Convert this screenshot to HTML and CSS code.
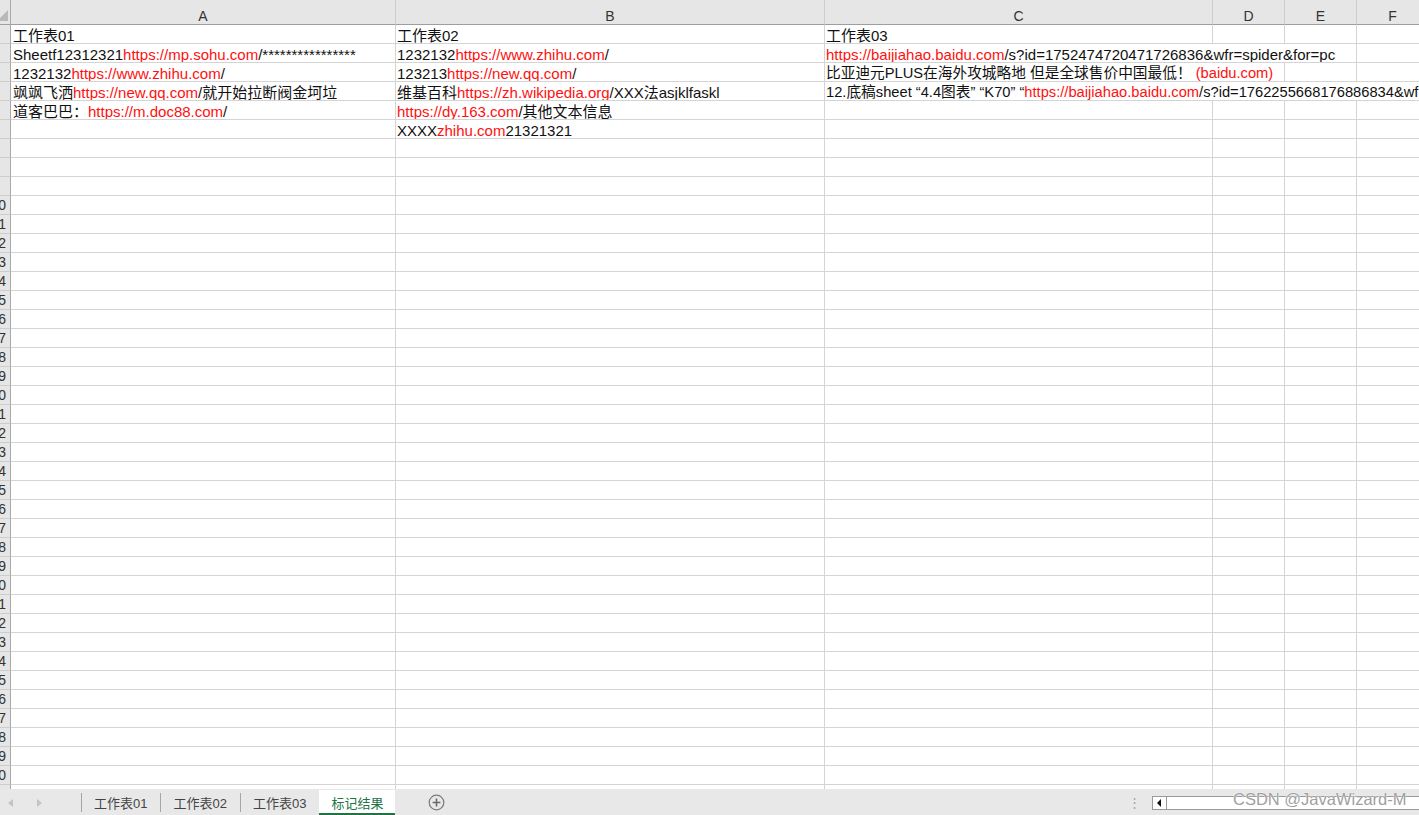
FILE: index.html
```html
<!DOCTYPE html>
<html lang="zh-CN">
<head>
<meta charset="utf-8">
<title>标记结果</title>
<link rel="stylesheet" href="styles.css">
</head>
<body>
<div class="app">
  <div class="sheet">
    <div class="row head">
      <div class="corner"><svg width="10" height="24" viewBox="0 0 10 24"><polygon points="8,10 8,21 -3,21" fill="#b9b9b9"/></svg></div>
      <div class="ch">A</div><div class="ch">B</div><div class="ch">C</div><div class="ch">D</div><div class="ch">E</div><div class="ch">F</div>
    </div>
    <div class="row"><div class="rh"></div><div class="c a">工作表01</div><div class="c">工作表02</div><div class="c">工作表03</div><div class="c"></div><div class="c"></div><div class="c"></div></div>
    <div class="row"><div class="rh"></div><div class="c a">Sheetf12312321<span class="r">https://mp.sohu.com</span>/****************</div><div class="c">1232132<span class="r">https://www.zhihu.com</span>/</div><div class="c span3"><span class="r">https://baijiahao.baidu.com</span>/s?id=1752474720471726836&amp;wfr=spider&amp;for=pc</div><div class="c"></div></div>
    <div class="row"><div class="rh"></div><div class="c a">1232132<span class="r">https://www.zhihu.com</span>/</div><div class="c">123213<span class="r">https://new.qq.com</span>/</div><div class="c span2 cjk">比亚迪元PLUS在海外攻城略地 但是全球售价中国最低！ <span class="r">(baidu.com)</span></div><div class="c"></div><div class="c"></div></div>
    <div class="row"><div class="rh"></div><div class="c a">飒飒飞洒<span class="r">https://new.qq.com</span>/就开始拉断阀金坷垃</div><div class="c">维基百科<span class="r">https://zh.wikipedia.org</span>/XXX法asjklfaskl</div><div class="c span4 cjk">12.底稿sheet “4.4图表” “K70” “<span class="r">https://baijiahao.baidu.com</span>/s?id=1762255668176886834&amp;wfr=spider&amp;for=pc”</div></div>
    <div class="row"><div class="rh"></div><div class="c a">道客巴巴：<span class="r">https://m.doc88.com</span>/</div><div class="c"><span class="r">https://dy.163.com</span>/其他文本信息</div><div class="c"></div><div class="c"></div><div class="c"></div><div class="c"></div></div>
    <div class="row"><div class="rh"></div><div class="c a"></div><div class="c">XXXX<span class="r">zhihu.com</span>21321321</div><div class="c"></div><div class="c"></div><div class="c"></div><div class="c"></div></div>
    <div class="row"><div class="rh"></div><div class="c"></div><div class="c"></div><div class="c"></div><div class="c"></div><div class="c"></div><div class="c"></div></div>
    <div class="row"><div class="rh"></div><div class="c"></div><div class="c"></div><div class="c"></div><div class="c"></div><div class="c"></div><div class="c"></div></div>
    <div class="row"><div class="rh"></div><div class="c"></div><div class="c"></div><div class="c"></div><div class="c"></div><div class="c"></div><div class="c"></div></div>
    <div class="row"><div class="rh">10</div><div class="c"></div><div class="c"></div><div class="c"></div><div class="c"></div><div class="c"></div><div class="c"></div></div>
    <div class="row"><div class="rh">11</div><div class="c"></div><div class="c"></div><div class="c"></div><div class="c"></div><div class="c"></div><div class="c"></div></div>
    <div class="row"><div class="rh">12</div><div class="c"></div><div class="c"></div><div class="c"></div><div class="c"></div><div class="c"></div><div class="c"></div></div>
    <div class="row"><div class="rh">13</div><div class="c"></div><div class="c"></div><div class="c"></div><div class="c"></div><div class="c"></div><div class="c"></div></div>
    <div class="row"><div class="rh">14</div><div class="c"></div><div class="c"></div><div class="c"></div><div class="c"></div><div class="c"></div><div class="c"></div></div>
    <div class="row"><div class="rh">15</div><div class="c"></div><div class="c"></div><div class="c"></div><div class="c"></div><div class="c"></div><div class="c"></div></div>
    <div class="row"><div class="rh">16</div><div class="c"></div><div class="c"></div><div class="c"></div><div class="c"></div><div class="c"></div><div class="c"></div></div>
    <div class="row"><div class="rh">17</div><div class="c"></div><div class="c"></div><div class="c"></div><div class="c"></div><div class="c"></div><div class="c"></div></div>
    <div class="row"><div class="rh">18</div><div class="c"></div><div class="c"></div><div class="c"></div><div class="c"></div><div class="c"></div><div class="c"></div></div>
    <div class="row"><div class="rh">19</div><div class="c"></div><div class="c"></div><div class="c"></div><div class="c"></div><div class="c"></div><div class="c"></div></div>
    <div class="row"><div class="rh">20</div><div class="c"></div><div class="c"></div><div class="c"></div><div class="c"></div><div class="c"></div><div class="c"></div></div>
    <div class="row"><div class="rh">21</div><div class="c"></div><div class="c"></div><div class="c"></div><div class="c"></div><div class="c"></div><div class="c"></div></div>
    <div class="row"><div class="rh">22</div><div class="c"></div><div class="c"></div><div class="c"></div><div class="c"></div><div class="c"></div><div class="c"></div></div>
    <div class="row"><div class="rh">23</div><div class="c"></div><div class="c"></div><div class="c"></div><div class="c"></div><div class="c"></div><div class="c"></div></div>
    <div class="row"><div class="rh">24</div><div class="c"></div><div class="c"></div><div class="c"></div><div class="c"></div><div class="c"></div><div class="c"></div></div>
    <div class="row"><div class="rh">25</div><div class="c"></div><div class="c"></div><div class="c"></div><div class="c"></div><div class="c"></div><div class="c"></div></div>
    <div class="row"><div class="rh">26</div><div class="c"></div><div class="c"></div><div class="c"></div><div class="c"></div><div class="c"></div><div class="c"></div></div>
    <div class="row"><div class="rh">27</div><div class="c"></div><div class="c"></div><div class="c"></div><div class="c"></div><div class="c"></div><div class="c"></div></div>
    <div class="row"><div class="rh">28</div><div class="c"></div><div class="c"></div><div class="c"></div><div class="c"></div><div class="c"></div><div class="c"></div></div>
    <div class="row"><div class="rh">29</div><div class="c"></div><div class="c"></div><div class="c"></div><div class="c"></div><div class="c"></div><div class="c"></div></div>
    <div class="row"><div class="rh">30</div><div class="c"></div><div class="c"></div><div class="c"></div><div class="c"></div><div class="c"></div><div class="c"></div></div>
    <div class="row"><div class="rh">31</div><div class="c"></div><div class="c"></div><div class="c"></div><div class="c"></div><div class="c"></div><div class="c"></div></div>
    <div class="row"><div class="rh">32</div><div class="c"></div><div class="c"></div><div class="c"></div><div class="c"></div><div class="c"></div><div class="c"></div></div>
    <div class="row"><div class="rh">33</div><div class="c"></div><div class="c"></div><div class="c"></div><div class="c"></div><div class="c"></div><div class="c"></div></div>
    <div class="row"><div class="rh">34</div><div class="c"></div><div class="c"></div><div class="c"></div><div class="c"></div><div class="c"></div><div class="c"></div></div>
    <div class="row"><div class="rh">35</div><div class="c"></div><div class="c"></div><div class="c"></div><div class="c"></div><div class="c"></div><div class="c"></div></div>
    <div class="row"><div class="rh">36</div><div class="c"></div><div class="c"></div><div class="c"></div><div class="c"></div><div class="c"></div><div class="c"></div></div>
    <div class="row"><div class="rh">37</div><div class="c"></div><div class="c"></div><div class="c"></div><div class="c"></div><div class="c"></div><div class="c"></div></div>
    <div class="row"><div class="rh">38</div><div class="c"></div><div class="c"></div><div class="c"></div><div class="c"></div><div class="c"></div><div class="c"></div></div>
    <div class="row"><div class="rh">39</div><div class="c"></div><div class="c"></div><div class="c"></div><div class="c"></div><div class="c"></div><div class="c"></div></div>
    <div class="row"><div class="rh">40</div><div class="c"></div><div class="c"></div><div class="c"></div><div class="c"></div><div class="c"></div><div class="c"></div></div>
    <div class="row"><div class="rh">41</div><div class="c"></div><div class="c"></div><div class="c"></div><div class="c"></div><div class="c"></div><div class="c"></div></div>
  </div>
  <div class="tabbar">
    <div class="nav">
      <svg width="6" height="8" viewBox="0 0 6 8"><polygon points="5,0 5,8 0,4" fill="#c4c4c4"/></svg>
      <svg width="6" height="8" viewBox="0 0 6 8"><polygon points="1,0 1,8 6,4" fill="#c4c4c4"/></svg>
    </div>
    <div class="tab">工作表01</div>
    <div class="tab">工作表02</div>
    <div class="tab">工作表03</div>
    <div class="tab active">标记结果</div>
    <div class="add">
      <svg width="17" height="17" viewBox="0 0 17 17"><circle cx="8.5" cy="8.5" r="7.3" fill="none" stroke="#7a7a7a" stroke-width="1.2"/><path d="M8.5 4.6v7.8M4.6 8.5h7.8" stroke="#6a6a6a" stroke-width="1.6"/></svg>
    </div>
    <div class="spacer"></div>
    <div class="dots">⋮</div>
    <div class="hscroll">
      <div class="sbtn"><svg width="5" height="8" viewBox="0 0 5 8"><polygon points="4,0 4,8 0,4" fill="#111"/></svg></div>
    </div>
    <div class="watermark">CSDN @JavaWizard-M</div>
  </div>
</div>
</body>
</html>
```
FILE: styles.css
```css
html, body {
  margin: 0;
  padding: 0;
}
body {
  width: 1419px;
  height: 815px;
  overflow: hidden;
  background: #fff;
  font-family: "Liberation Sans", "Noto Sans CJK SC", sans-serif;
  color: #000;
}
.app {
  display: flex;
  flex-direction: column;
  height: 815px;
}
.sheet {
  height: 789px;
  overflow: hidden;
  flex: none;
}
.row {
  display: grid;
  grid-template-columns: 11px 385px 429px 388px 72px 72px 72px;
  height: 19px;
}
.row.head {
  height: 25px;
}
.corner {
  background: #e6e6e6;
  border-right: 1px solid #a8a8a8;
  border-bottom: 1px solid #a0a0a0;
  box-sizing: border-box;
  overflow: hidden;
}
.corner svg { display: block; }
.ch {
  background: #e6e6e6;
  border-right: 1px solid #cdcdcd;
  border-bottom: 1px solid #9e9e9e;
  box-sizing: border-box;
  text-align: center;
  font-size: 14px;
  line-height: 15px;
  color: #333;
  padding-top: 9px;
}
.rh {
  background: #e6e6e6;
  border-right: 1px solid #a8a8a8;
  border-bottom: 1px solid #cdcdcd;
  box-sizing: border-box;
  overflow: hidden;
  display: flex;
  justify-content: flex-end;
  align-items: center;
  font-size: 14px;
  color: #333;
  padding-right: 4px;
  white-space: nowrap;
}
.c {
  border-right: 1px solid #d4d4d4;
  border-bottom: 1px solid #d4d4d4;
  box-sizing: border-box;
  white-space: nowrap;
  overflow: hidden;
  font-size: 15px;
  line-height: 17px;
  padding-top: 2px;
  padding-left: 1px;
  color: #111;
}
.c.a { padding-left: 2px; }
.c.cjk { font-size: 14.7px; }
.span2 { grid-column: span 2; }
.span3 { grid-column: span 3; }
.span4 { grid-column: span 4; border-right: none; }
.r { color: #ff1010; }

.tabbar {
  position: relative;
  flex: none;
  height: 26px;
  background: #e8e8e8;
  display: flex;
  align-items: stretch;
  font-size: 13px;
  color: #444;
}
.nav {
  width: 82px;
  display: flex;
  align-items: center;
  gap: 22px;
  padding-left: 8px;
  box-sizing: border-box;
  border-right: 1px solid #a6a6a6;
  margin: 4px 0 3px;
}
.tab {
  padding: 0 13px 0 12px;
  display: flex;
  align-items: center;
  border-right: 1px solid #a6a6a6;
  margin: 4px 0 3px;
  white-space: nowrap;
}
.tab.active {
  margin: 1px 0 0;
  background: #fff;
  color: #217346;
  border-right: none;
  border-bottom: 2px solid #217346;
  padding: 2px 12px 0 12px;
  margin-left: -1px;
}
.add {
  display: flex;
  align-items: center;
  margin-left: 33px;
}
.add svg { display: block; }
.spacer { flex: 1; }
.dots {
  display: flex;
  align-items: center;
  color: #a6a6a6;
  font-size: 13px;
  width: 12px;
  margin-right: 12px;
}
.hscroll {
  width: 275px;
  margin: 7px -8px 5px 0;
  background: #fff;
  border: 1px solid #9a9a9a;
  box-sizing: border-box;
  display: flex;
}
.sbtn {
  width: 13px;
  border-right: 1px solid #9a9a9a;
  display: flex;
  align-items: center;
  justify-content: center;
}
.sbtn svg { display: block; }
.watermark {
  position: absolute;
  left: 1233px;
  top: 0;
  font-size: 16.5px;
  line-height: 20px;
  color: #a0a0a0;
  white-space: nowrap;
  text-shadow: 0 0 1px #fff, 0 0 1px #fff;
}
```
